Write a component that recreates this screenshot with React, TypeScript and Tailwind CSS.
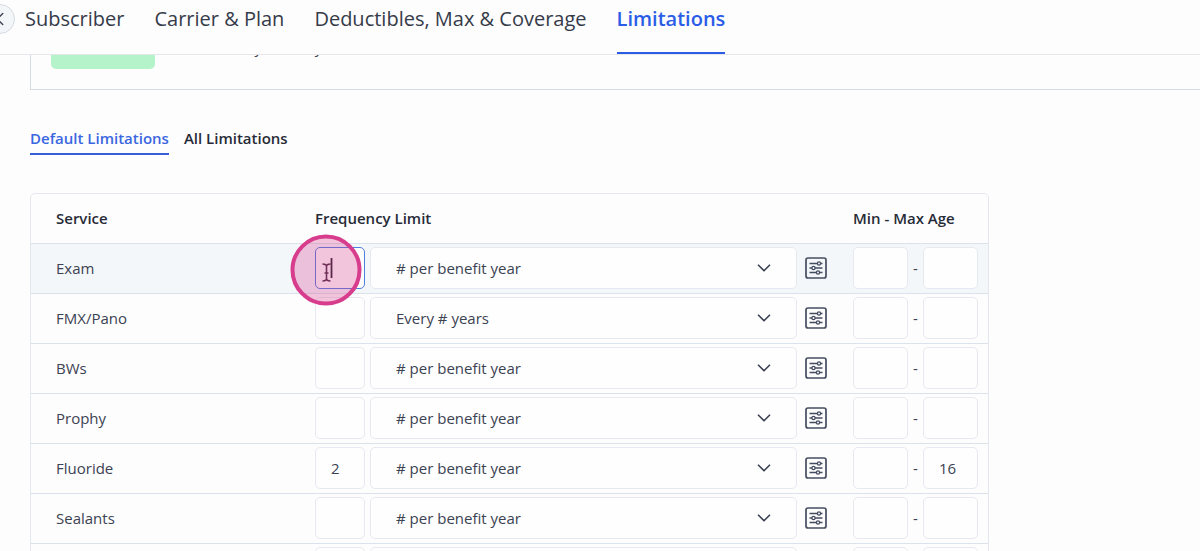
import { useState } from 'react'
import { clsx } from 'clsx'
import { ChevronDown, ChevronLeft } from 'lucide-react'

const steps = ['Subscriber', 'Carrier & Plan', 'Deductibles, Max & Coverage', 'Limitations']

const tabs = ['Default Limitations', 'All Limitations']

const frequencies = ['# per benefit year', 'Every # years']

const services = [
  { name: 'Exam', limit: '', frequency: '# per benefit year', min: '', max: '' },
  { name: 'FMX/Pano', limit: '', frequency: 'Every # years', min: '', max: '' },
  { name: 'BWs', limit: '', frequency: '# per benefit year', min: '', max: '' },
  { name: 'Prophy', limit: '', frequency: '# per benefit year', min: '', max: '' },
  { name: 'Fluoride', limit: '2', frequency: '# per benefit year', min: '', max: '16' },
  { name: 'Sealants', limit: '', frequency: '# per benefit year', min: '', max: '' },
  { name: 'Fillings', limit: '', frequency: '# per benefit year', min: '', max: '' },
]

const fieldClass = 'h-[42px] rounded-[5px] border bg-[#fefefe] outline-none'

function SlidersIcon() {
  return (
    <svg width="22" height="22" viewBox="0 0 22 22" fill="none" stroke="#454d60" aria-hidden="true">
      <rect x="1" y="1" width="20" height="20" rx="2" strokeWidth="1.7" />
      <path d="M4.5 6.5h8M15.5 6.5h2M4.5 11h2.5M10 11h7.5M4.5 15.5h7M14.5 15.5h3" strokeWidth="1.3" />
      <circle cx="14" cy="6.5" r="1.6" strokeWidth="1.3" />
      <circle cx="8.5" cy="11" r="1.6" strokeWidth="1.3" />
      <circle cx="13" cy="15.5" r="1.6" strokeWidth="1.3" />
    </svg>
  )
}

function ClickMarker() {
  return (
    <svg
      className="pointer-events-none absolute -top-[13px] -left-[25px] z-10"
      width="72"
      height="72"
      viewBox="0 0 72 72"
      fill="none"
      aria-hidden="true"
    >
      <path d="M41.5 24v20" stroke="#2b2230" strokeWidth="1.8" />
      <path
        d="M32.5 30c2.500 0 4 .5 4 2.500v12c0 2-1.500 2.500-4 2.500M40.500 30c-2.500 0-4 .5-4 2.500M40.500 47c-2.500 0-4-.5-4-2.500M34.500 39h4"
        stroke="#4a3048"
        strokeWidth="1.6"
      />
      <circle cx="36" cy="36" r="33.5" fill="#d6338a" fillOpacity="0.28" stroke="#d73d8c" strokeWidth="4" />
    </svg>
  )
}

export default function App() {
  const [step, setStep] = useState('Limitations')
  const [tab, setTab] = useState('Default Limitations')

  return (
    <div className="flex h-screen flex-col overflow-hidden bg-[#fdfdfd] font-['Open_Sans','Noto_Sans',sans-serif] text-[15px] text-[#3b4252]">
      <header className="flex h-[55px] shrink-0 items-start border-b border-[#e6e7ea]">
        <button
          aria-label="Back"
          className="mt-1 -ml-[15px] flex size-[30px] shrink-0 items-center justify-center rounded-full border border-[#d5dae1] bg-[#f3f6f9]"
        >
          <ChevronLeft size={22} strokeWidth={1.5} />
        </button>
        <nav className="ml-[10px] flex gap-[30px]">
          {steps.map((label) => (
            <button
              key={label}
              onClick={() => setStep(label)}
              className={clsx(
                'h-[54px] border-b-2 pb-[14px] text-[20px] leading-[38px] whitespace-nowrap',
                step === label
                  ? 'border-[#2b5ce6] font-semibold text-[#2b5ce6]'
                  : 'border-transparent text-[#363b49]'
              )}
            >
              {label}
            </button>
          ))}
        </nav>
      </header>

      <main className="min-h-0 flex-1 overflow-hidden pl-[30px]">
        <section className="-mt-5 flex h-[55px] items-start border-b border-l border-[#d6dce4] pl-5">
          <span className="h-[34px] w-[104px] rounded-[5px] bg-[#b5f3cb]" />
          <p className="ml-3 leading-6">Most recently done by office staff</p>
        </section>

        <div className="mt-[38px] flex gap-[15px]">
          {tabs.map((label) => (
            <button
              key={label}
              onClick={() => setTab(label)}
              className={clsx(
                'h-[27px] border-b-2 pb-[5px] leading-5 font-semibold',
                tab === label ? 'border-[#3560d8] text-[#3a66e0]' : 'border-transparent text-[#272b37]'
              )}
            >
              {label}
            </button>
          ))}
        </div>

        <div className="mt-[38px] max-w-[959px] rounded-t-[5px] border border-[#e4e8ee]">
          <table className="w-full table-fixed border-collapse">
            <thead>
              <tr className="h-[49px] text-left text-[#272b37]">
                <th className="w-[284px] pl-[25px] font-semibold">Service</th>
                <th className="font-semibold">Frequency Limit</th>
                <th className="w-[135px] font-semibold">Min - Max Age</th>
              </tr>
            </thead>
            <tbody>
              {services.map((service, i) => (
                <tr key={service.name} className={clsx('h-[50px] border-t border-[#dbe2eb]', i === 0 && 'bg-[#f3f7fa]')}>
                  <td className="pl-[25px]">{service.name}</td>
                  <td>
                    <div className="relative flex items-center">
                      <input
                        aria-label={`${service.name} limit`}
                        defaultValue={service.limit}
                        className={clsx(
                          fieldClass,
                          'w-[50px] shrink-0 pl-[15px]',
                          i === 0 ? 'border-[#4f7de0]' : 'border-[#e6e9ef]'
                        )}
                      />
                      {i === 0 && <ClickMarker />}
                      <div className="relative ml-[5px] flex-1">
                        <select
                          aria-label={`${service.name} frequency`}
                          defaultValue={service.frequency}
                          className={clsx(fieldClass, 'w-full appearance-none border-[#e6e9ef] pl-[25px]')}
                        >
                          {frequencies.map((f) => (
                            <option key={f}>{f}</option>
                          ))}
                        </select>
                        <ChevronDown
                          size={22}
                          strokeWidth={1.8}
                          className="pointer-events-none absolute top-[10px] right-[22px]"
                        />
                      </div>
                      <button aria-label={`${service.name} options`} className="mr-[26px] ml-2">
                        <SlidersIcon />
                      </button>
                    </div>
                  </td>
                  <td>
                    <div className="flex items-center">
                      <input
                        aria-label={`${service.name} minimum age`}
                        defaultValue={service.min}
                        className={clsx(fieldClass, 'w-[55px] border-[#e6e9ef] pl-[15px]')}
                      />
                      <span className="w-[15px] text-center">-</span>
                      <input
                        aria-label={`${service.name} maximum age`}
                        defaultValue={service.max}
                        className={clsx(fieldClass, 'w-[55px] border-[#e6e9ef] pl-[15px]')}
                      />
                    </div>
                  </td>
                </tr>
              ))}
            </tbody>
          </table>
        </div>
      </main>
    </div>
  )
}
